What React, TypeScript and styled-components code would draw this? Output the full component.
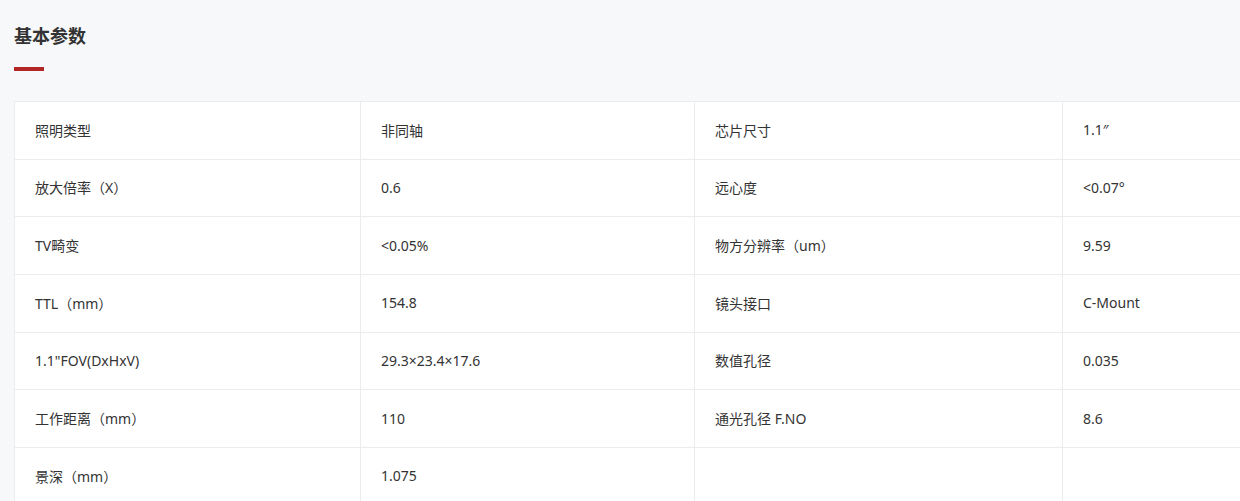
import React from "react";
import styled, { createGlobalStyle } from "styled-components";

const Global = createGlobalStyle`
  html, body { margin: 0; padding: 0; background: #f7f8fa; overflow: hidden; }
  body { font-family: "Noto Sans", "Noto Sans CJK SC", sans-serif; color: #333; }
`;

const Page = styled.div`
  padding: 20px 0 0 14px;
  width: 1400px;
`;

const Title = styled.h2`
  margin: 0;
  font-family: "Noto Sans CJK SC", sans-serif;
  font-size: 18px;
  line-height: 30px;
  font-weight: 700;
  color: #333;
`;

const Bar = styled.div`
  width: 30px;
  height: 4px;
  background: #b32626;
  margin-top: 17px;
`;

const Table = styled.div`
  margin-top: 30px;
  display: grid;
  grid-template-columns: 346px 334px 368px 400px;
  background: #fff;
  border-top: 1px solid #ececec;
  border-left: 1px solid #ececec;
`;

const Cell = styled.div`
  height: 57.67px;
  box-sizing: border-box;
  padding-left: 20px;
  padding-bottom: 1px;
  display: flex;
  align-items: center;
  font-size: 14px;
  color: #333;
  border-right: 1px solid #ececec;
  border-bottom: 1px solid #ececec;
  white-space: nowrap;
`;

const rows: [string, string, string, string][] = [
  ["照明类型", "非同轴", "芯片尺寸", "1.1″"],
  ["放大倍率（X）", "0.6", "远心度", "<0.07°"],
  ["TV畸变", "<0.05%", "物方分辨率（um）", "9.59"],
  ["TTL（mm）", "154.8", "镜头接口", "C-Mount"],
  ["1.1\"FOV(DxHxV)", "29.3×23.4×17.6", "数值孔径", "0.035"],
  ["工作距离（mm）", "110", "通光孔径 F.NO", "8.6"],
  ["景深（mm）", "1.075", "", ""],
];

export default function App() {
  return (
    <>
      <Global />
      <Page>
        <Title>基本参数</Title>
        <Bar />
        <Table>
          {rows.flatMap((r, i) =>
            r.map((c, j) => <Cell key={`${i}-${j}`}>{c}</Cell>)
          )}
        </Table>
      </Page>
    </>
  );
}
